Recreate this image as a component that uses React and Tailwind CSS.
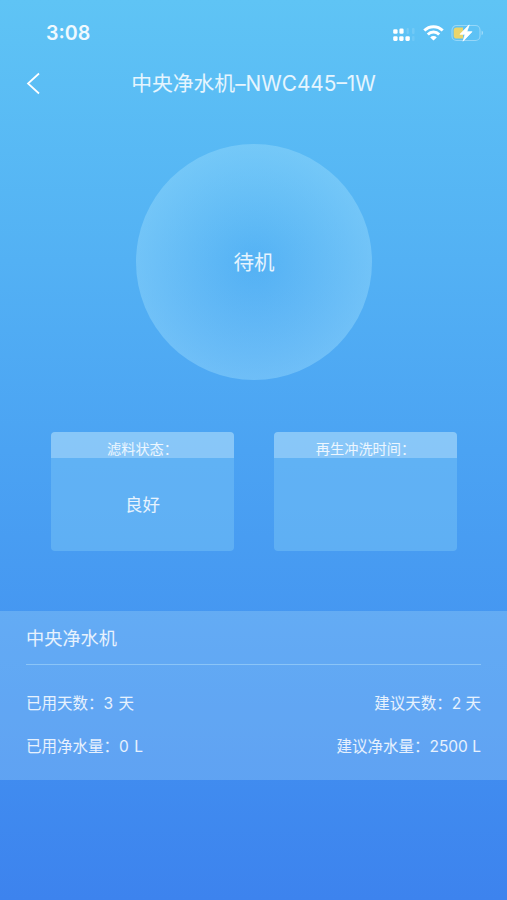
const usage = [
  { used: '已用天数：3 天', suggested: '建议天数：2 天' },
  { used: '已用净水量：0 L', suggested: '建议净水量：2500 L' },
];

function SignalIcon() {
  return (
    <svg className="mt-[3px]" width="23" height="14" viewBox="0 0 23 14" fill="white">
      <rect x="0.2" y="1.2" width="4.4" height="4.6" rx="1.3" />
      <rect x="6.4" y="0.4" width="4.2" height="5.4" rx="1.3" />
      <rect x="13.6" y="0" width="2.2" height="6" rx="1" opacity="0.15" />
      <rect x="19" y="0" width="2.6" height="6" rx="1" opacity="0.12" />
      <rect x="19" y="8" width="2.6" height="5" rx="1" opacity="0.1" />
      <rect x="0.2" y="8.3" width="4.4" height="4.6" rx="1.3" />
      <rect x="6.2" y="8.3" width="4.4" height="4.6" rx="1.3" />
      <rect x="12.4" y="8.3" width="4.4" height="4.6" rx="1.3" />
    </svg>
  );
}

function WifiIcon() {
  return (
    <svg width="21" height="16" viewBox="0 0 21 16" fill="none" stroke="white" strokeWidth="2.9">
      <path d="M1.3 5.5a13 13 0 0 1 18.4 0" />
      <path d="M4.8 9.4a8 8 0 0 1 11.4 0" />
      <path d="M10.5 15.6 7.2 12.4a4.7 4.7 0 0 1 6.6 0Z" fill="white" stroke="none" />
    </svg>
  );
}

function BatteryIcon() {
  return (
    <svg width="33" height="18" viewBox="0 0 33 18" fill="none">
      <rect x="1" y="1.5" width="28" height="15" rx="4.5" stroke="white" strokeOpacity="0.35" strokeWidth="1.1" />
      <path d="M30.6 6.6c1.9.8 1.9 3.9 0 4.7Z" fill="white" fillOpacity="0.4" />
      <path d="M5.5 3.4H12v11.2H5.5a2.8 2.8 0 0 1-2.8-2.8V6.2a2.8 2.8 0 0 1 2.8-2.8Z" fill="#e9d56c" />
      <path d="M18.2.9 9 10.3h5.1l-2 6.9L21 7.7h-5.2Z" fill="white" stroke="white" strokeWidth="0.8" strokeLinejoin="round" />
    </svg>
  );
}

function StatusCard({ title, children }) {
  return (
    <div className="flex h-[119px] w-[183px] flex-col overflow-hidden rounded-[4px] bg-[#73bff5]/55">
      <div className="flex h-[26px] shrink-0 justify-center bg-[#dcf2ff]/32 pt-[6.5px] text-[14.2px] leading-[20px] text-white/85">
        {title}
      </div>
      <div className="flex flex-1 items-center justify-center pt-px text-[17.5px]">{children}</div>
    </div>
  );
}

export default function App() {
  return (
    <div className="flex h-[900px] w-[507px] flex-col overflow-hidden bg-linear-to-b from-[#5fc4f5] via-[#4ba3f3] to-[#3d83ee] font-['Inter','Noto_Sans_CJK_SC',sans-serif] text-white/85">
      <div className="flex h-[60px] shrink-0 items-start justify-between pt-[21px] pr-[23px] pl-[46px]">
        <span className="text-[19.6px] leading-[25px] font-semibold text-white/90">3:08</span>
        <div className="flex items-center gap-[7px] pt-[3px]">
          <SignalIcon />
          <WifiIcon />
          <BatteryIcon />
        </div>
      </div>

      <header className="grid h-[46px] shrink-0 grid-cols-[60px_1fr_60px] items-center">
        <button className="pl-[26px]">
          <svg width="15" height="23" viewBox="0 0 15 23" fill="none" stroke="white" strokeWidth="1.7">
            <path d="M13 1.5 2 11.5l11 10" />
          </svg>
        </button>
        <h1 className="pt-px text-center text-[20.8px] leading-[28px] whitespace-nowrap">中央净水机–NWC445–1W</h1>
      </header>

      <div className="mt-[37.5px] ml-[136px] flex size-[236px] shrink-0 items-center justify-center rounded-full bg-[radial-gradient(circle_closest-side,rgba(160,223,253,0.04)_8%,rgba(160,223,253,0.4)_100%)] pt-[4px] text-[20.5px]">
        待机
      </div>

      <div className="mt-[52.5px] flex shrink-0 justify-between pr-[50px] pl-[51px]">
        <StatusCard title="滤料状态：">良好</StatusCard>
        <StatusCard title="再生冲洗时间：" />
      </div>

      <section className="mt-[60px] h-[169px] shrink-0 bg-[#b4e1fb]/27 px-[26px]">
        <h2 className="h-[54px] border-b border-[#b4e1fb]/50 pt-[13.5px] text-[18.2px] leading-[26px]">中央净水机</h2>
        <div className="flex flex-col gap-[19px] pt-[27px] text-[15.5px] leading-[24px]">
          {usage.map((row) => (
            <div key={row.used} className="flex justify-between">
              <span className="[word-spacing:1px]">{row.used}</span>
              <span>{row.suggested}</span>
            </div>
          ))}
        </div>
      </section>
    </div>
  );
}
